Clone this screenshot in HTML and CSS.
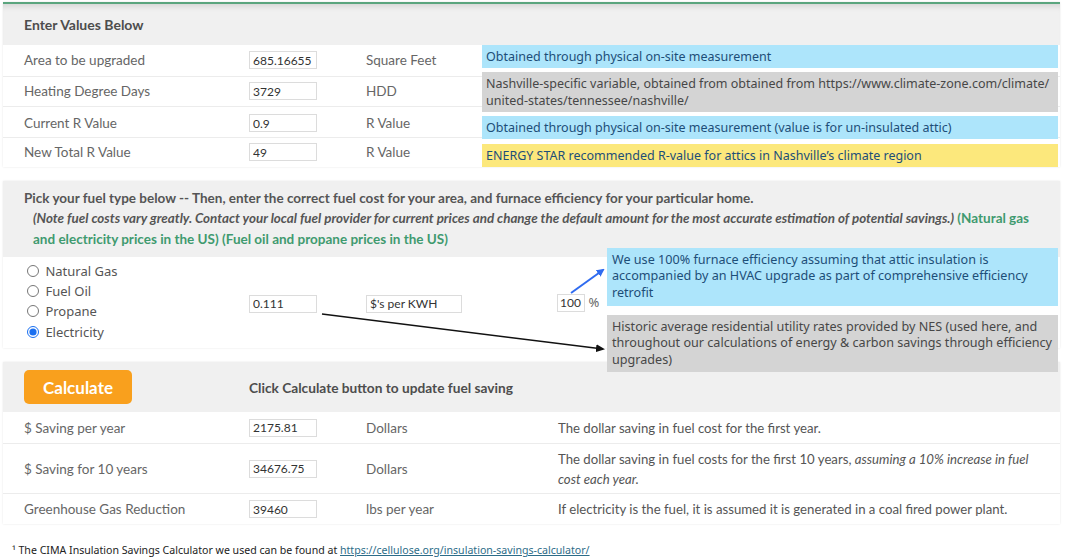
FILE: index.html
```html
<!DOCTYPE html>
<html lang="en">
<head>
  <meta charset="UTF-8" />
  <title>Insulation Savings Calculator</title>
  <link rel="stylesheet" href="styles.css">
</head>
<body>
<div class="page">

  <section class="panel values">
    <div class="panel-head">Enter Values Below</div>
    <div class="row">
      <span class="label">Area to be upgraded</span>
      <span><input class="box" type="text" value="685.16655"></span>
      <span class="unit">Square Feet</span>
      <span class="note note-blue n1">Obtained through physical on-site measurement</span>
    </div>
    <div class="row">
      <span class="label">Heating Degree Days</span>
      <span><input class="box" type="text" value="3729"></span>
      <span class="unit">HDD</span>
      <span class="note note-gray n2">Nashville-specific variable, obtained from obtained from https://www.climate-zone.com/climate/<br>united-states/tennessee/nashville/</span>
    </div>
    <div class="row">
      <span class="label">Current R Value</span>
      <span><input class="box" type="text" value="0.9"></span>
      <span class="unit">R Value</span>
      <span class="note note-blue n3">Obtained through physical on-site measurement (value is for un-insulated attic)</span>
    </div>
    <div class="row">
      <span class="label">New Total R Value</span>
      <span><input class="box" type="text" value="49"></span>
      <span class="unit">R Value</span>
      <span class="note note-yellow n4">ENERGY STAR recommended R-value for attics in Nashville’s climate region</span>
    </div>
  </section>

  <section class="panel fuel">
    <div class="panel-head fuel-head">
      <p class="fuel-title">Pick your fuel type below -- Then, enter the correct fuel cost for your area, and furnace efficiency for your particular home.</p>
      <p class="fuel-note"><em>(Note fuel costs vary greatly. Contact your local fuel provider for current prices and change the default amount for the most accurate estimation of potential savings.)</em> <span class="green">(Natural gas<br>and electricity prices in the US) (Fuel oil and propane prices in the US)</span></p>
    </div>
    <div class="fuel-body">
      <div class="radios">
        <label><input type="radio" name="fuel"> Natural Gas</label>
        <label><input type="radio" name="fuel"> Fuel Oil</label>
        <label><input type="radio" name="fuel"> Propane</label>
        <label><input type="radio" name="fuel" checked> Electricity</label>
      </div>
      <div class="cost"><input class="box" type="text" value="0.111"></div>
      <div class="cost-unit"><input class="box unit-box" type="text" value="$'s per KWH"></div>
      <div class="eff"><input class="box eff-box" type="text" value="100"> %</div>
      <div class="fuel-notes">
        <div class="note note-blue big">We use 100% furnace efficiency assuming that attic insulation is<br>accompanied by an HVAC upgrade as part of comprehensive efficiency<br>retrofit</div>
        <div class="note note-gray big">Historic average residential utility rates provided by NES (used here, and<br>throughout our calculations of energy &amp; carbon savings through efficiency<br>upgrades)</div>
      </div>
    </div>
  </section>

  <section class="panel results">
    <div class="panel-head calc-head">
      <span><button class="calc-btn" type="button">Calculate</button></span>
      <span class="calc-hint">Click Calculate button to update fuel saving</span>
    </div>
    <div class="row result">
      <span class="label">$ Saving per year</span>
      <span><input class="box" type="text" value="2175.81"></span>
      <span class="unit">Dollars</span>
      <span class="desc">The dollar saving in fuel cost for the first year.</span>
    </div>
    <div class="row result tall">
      <span class="label">$ Saving for 10 years</span>
      <span><input class="box" type="text" value="34676.75"></span>
      <span class="unit">Dollars</span>
      <span class="desc">The dollar saving in fuel costs for the first 10 years, <em>assuming a 10% increase in fuel<br>cost each year.</em></span>
    </div>
    <div class="row result">
      <span class="label">Greenhouse Gas Reduction</span>
      <span><input class="box" type="text" value="39460"></span>
      <span class="unit">lbs per year</span>
      <span class="desc">If electricity is the fuel, it is assumed it is generated in a coal fired power plant.</span>
    </div>
  </section>

  <p class="footnote">¹ The CIMA Insulation Savings Calculator we used can be found at <a href="#">https://cellulose.org/insulation-savings-calculator/</a></p>

  <!-- annotation arrows drawn over the form -->
  <svg class="arrows" width="1065" height="560" viewBox="0 0 1065 560">
    <defs>
      <marker id="headBlue" markerWidth="8" markerHeight="8" refX="6" refY="4" orient="auto" markerUnits="userSpaceOnUse">
        <path d="M0,0 L8,4 L0,8 Z" fill="#2f6bf0"/>
      </marker>
      <marker id="headBlack" markerWidth="9" markerHeight="8" refX="7" refY="4" orient="auto" markerUnits="userSpaceOnUse">
        <path d="M0,0 L9,4 L0,8 Z" fill="#111"/>
      </marker>
    </defs>
    <line x1="571" y1="293" x2="603" y2="270" stroke="#2f6bf0" stroke-width="2" marker-end="url(#headBlue)"/>
    <line x1="322" y1="314" x2="603" y2="349" stroke="#111" stroke-width="1.5" marker-end="url(#headBlack)"/>
  </svg>
</div>
</body>
</html>
```

FILE: styles.css
```css
* {
  box-sizing: border-box;
}

body {
  margin: 0;
  background: #fff;
  font-family: Lato, 'Liberation Sans', sans-serif;
  color: #666;
}

.page {
  position: relative;
  padding: 2px 5px 0 3px;
}

.panel {
  background: #fff;
  box-shadow: 0 0 2px rgba(0, 0, 0, 0.1);
}

.panel + .panel {
  margin-top: 14px;
}

.results {
  margin-top: 13px;
}

.values {
  border-top: 2px solid #5aa57e;
}

.panel-head {
  background: #f0f0f0;
}

.values .panel-head {
  height: 41px;
  display: flex;
  align-items: center;
  padding-left: 21px;
  font-size: 14px;
  font-weight: 700;
  color: #4d4d4d;
  box-shadow: inset 0 7px 6px -5px rgba(0, 0, 0, 0.13);
}

.row {
  display: grid;
  grid-template-columns: 225px 117px 116px 1fr;
  align-items: center;
  height: 31px;
  padding: 0 2px 0 21px;
  border-top: 1px solid #ececec;
  font-size: 13.5px;
}

.values .row {
  height: 30.5px;
}

.panel-head + .row {
  border-top: none;
}

.box {
  width: 68px;
  height: 18px;
  border: 1px solid #dcdcdc;
  padding: 0 3px;
  font: 12px Lato, 'Liberation Sans', sans-serif;
  color: #333;
  background: #fff;
}

.unit {
  color: #666;
}

.note {
  font-family: 'Noto Sans', 'Liberation Sans', sans-serif;
  font-size: 12.5px;
  line-height: 17px;
  padding: 3px 4px;
  color: #1d4e78;
}

.note-blue {
  background: #ade5fb;
}

.note-gray {
  background: #d4d4d4;
  color: #474747;
}

.note-yellow {
  background: #fce87c;
}

.n1 {
  align-self: start;
}

.n2 {
  margin: -5px 0 -6px;
}

.n3 {
  margin-top: 9px;
}

.n4 {
  margin-top: 6px;
}

/* fuel section */

.fuel-head {
  padding: 7px 2px 8px 21px;
  font-size: 13.5px;
  line-height: 20.3px;
  color: #555;
}

.fuel-head p {
  margin: 0;
}

.fuel-title {
  font-weight: 700;
}

.fuel-note {
  padding-left: 9px;
  font-weight: 700;
}

.fuel-note em {
  font-size: 13.4px;
}

.fuel-note .green {
  color: #3f9a6f;
}

.fuel-body {
  display: flex;
  align-items: center;
  padding-right: 2px;
}

.radios {
  width: 246px;
  padding: 4px 0 6px 24px;
  display: flex;
  flex-direction: column;
  font-family: 'Noto Sans', 'Liberation Sans', sans-serif;
  font-size: 13px;
  line-height: 20.3px;
  color: #555;
}

.radios input {
  margin: 0 3px 0 0;
  width: 12px;
  height: 12px;
  vertical-align: -1px;
  accent-color: #1a6ff0;
}

.cost {
  width: 117px;
}

.cost-unit {
  width: 191px;
}

.unit-box {
  width: 96px;
}

.eff {
  width: 50px;
  font-family: 'Noto Sans', 'Liberation Sans', sans-serif;
  font-size: 13px;
  color: #666;
}

.eff-box {
  width: 28px;
  padding: 0 2px;
}

.fuel-notes {
  flex: 1;
  align-self: flex-start;
  display: flex;
  flex-direction: column;
  gap: 9px;
  margin: -9px 0 -25px;
  position: relative;
  z-index: 1;
}

.note.big {
  font-size: 12.6px;
  line-height: 16.6px;
  padding: 4px 5px;
}

/* results section */

.calc-head {
  display: grid;
  grid-template-columns: 225px 1fr;
  align-items: center;
  height: 50px;
  padding-left: 21px;
}

.calc-btn {
  width: 108px;
  height: 34px;
  border: none;
  border-radius: 5px;
  background: #f9a01d;
  color: #fff;
  font: 700 17px Lato, 'Liberation Sans', sans-serif;
  cursor: pointer;
}

.calc-hint {
  font-size: 13.7px;
  font-weight: 700;
  color: #4d4d4d;
}

.results .row {
  grid-template-columns: 225px 117px 192px 1fr;
}

.results .row.tall {
  height: 50px;
}

.desc {
  font-size: 13.2px;
  line-height: 20px;
  color: #555;
}

.footnote {
  margin: 19px 0 0 9px;
  font-family: 'Noto Sans', 'Liberation Sans', sans-serif;
  font-size: 10.6px;
  color: #222;
}

.footnote a {
  color: #2c6c88;
}

.arrows {
  position: absolute;
  top: 0;
  left: 0;
  z-index: 2;
  pointer-events: none;
}
```
